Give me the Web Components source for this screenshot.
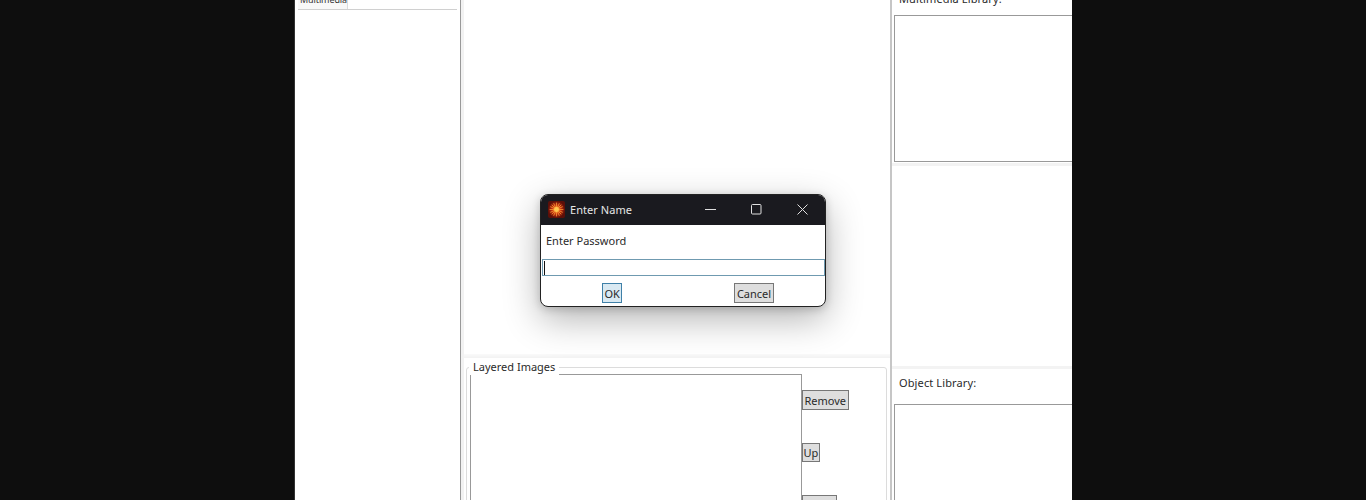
<!DOCTYPE html>
<html>
<head>
<meta charset="utf-8">
<title>Enter Name</title>
<style>
  html, body { margin: 0; height: 100%; background: #0e0e0e; overflow: hidden; }
  body { display: flex; justify-content: center; font: 11px "Noto Sans", "Liberation Sans", sans-serif; color: #2a2a2a; }
</style>
</head>
<body>
<template id="tpl-button">
  <style>
    :host { display: block; width: max-content; }
    button { display: block; font: inherit; color: #2a2a2a; height: var(--h, 20px); padding: 0 var(--px, 1.5px); background: #dedede; border: 1px solid #777; margin: 0; }
    :host([accent]) button { background: #d9e9f2; border-color: #3f80a8; }
  </style>
  <button><slot></slot></button>
</template>
<script>
  class WinButton extends HTMLElement {
    constructor() {
      super();
      this.attachShadow({ mode: "open" });
      this.shadowRoot.appendChild(document.getElementById("tpl-button").content.cloneNode(true));
    }
  }
  customElements.define("win-button", WinButton);

  class WinList extends HTMLElement {
    constructor() {
      super();
      this.attachShadow({ mode: "open" });
      this.shadowRoot.innerHTML = `
        <style>
          :host { display: block; box-sizing: border-box; background: #fff; border: 1px solid #999; }
        </style>
        <slot></slot>`;
    }
  }
  customElements.define("win-list", WinList);

  class SideTabs extends HTMLElement {
    constructor() {
      super();
      this.attachShadow({ mode: "open" });
      this.shadowRoot.innerHTML = `
        <style>
          :host { display: flex; flex-direction: column; height: 100%; box-sizing: border-box; background: #fff; border-left: 1px solid #333; border-right: 1px solid #999; padding: 0 3px; }
          .strip { height: 10px; flex: none; display: flex; align-items: flex-end; border-bottom: 1px solid #d0d0d0; box-sizing: border-box; overflow: hidden; }
          .tab { height: 14px; flex: none; width: 50px; box-sizing: border-box; padding-left: 2px; line-height: 9px; font-size: 9px; letter-spacing: -.1px; background: #f8f8f8; border-right: 1px solid #dcdcdc; color: #333; overflow: hidden; white-space: nowrap; }
        </style>
        <div class="strip"><div class="tab"><slot name="tab"></slot></div></div>
        <slot></slot>`;
    }
  }
  customElements.define("side-tabs", SideTabs);

  class LayerGroup extends HTMLElement {
    constructor() {
      super();
      this.attachShadow({ mode: "open" });
      this.shadowRoot.innerHTML = `
        <style>
          :host { display: block; flex: 1; min-height: 0; padding: 2px 3px 0 2px; }
          .frame { height: 200px; box-sizing: border-box; margin-top: 7px; border: 1px solid #dcdcdc; border-radius: 3px; padding: 6px 0 0 3px; display: flex; position: relative; }
          .legend { position: absolute; left: 2px; top: -9px; padding: 0 4px; background: #fff; line-height: 16px; }
          win-list { width: 332px; height: 300px; flex: none; }
          .actions { display: flex; flex-direction: column; padding-top: 16px; }
          .actions ::slotted(*) { flex: none; margin-bottom: 33px; }
        </style>
        <div class="frame">
          <div class="legend"><slot name="legend"></slot></div>
          <win-list></win-list>
          <div class="actions"><slot></slot></div>
        </div>`;
    }
  }
  customElements.define("layer-group", LayerGroup);

  class LibraryPane extends HTMLElement {
    constructor() {
      super();
      this.attachShadow({ mode: "open" });
      this.shadowRoot.innerHTML = `
        <style>
          :host { display: flex; flex-direction: column; min-height: 0; overflow: hidden; background: #fff; }
          .label { flex: none; display: flex; align-items: flex-end; height: var(--label-h, 35px); box-sizing: border-box; padding: 0 0 var(--label-pad, 13px) 7px; line-height: 16px; white-space: nowrap; letter-spacing: .12px; }
          win-list { flex: none; height: var(--list-h, 300px); margin-left: 2px; border-right: none; }
        </style>
        <div class="label"><slot></slot></div>
        <win-list></win-list>`;
    }
  }
  customElements.define("library-pane", LibraryPane);

  class NameDialog extends HTMLElement {
    constructor() {
      super();
      this.attachShadow({ mode: "open" });
      this.shadowRoot.innerHTML = `
        <style>
          :host { position: absolute; left: 246px; top: 194px; width: 286px; height: 113px; display: flex; flex-direction: column; box-sizing: border-box; background: #fff; border: 1px solid #222; border-radius: 8px; box-shadow: 0 12px 36px rgba(0,0,0,.3), 0 2px 8px rgba(0,0,0,.18); overflow: hidden; }
          .title { flex: none; height: 30px; background: #1a1a1f; color: #e6e6e6; display: flex; align-items: center; padding: 0 0 2px 7px; box-sizing: border-box; }
          .title svg.logo { margin-right: 5px; flex: none; }
          .name { flex: 1; letter-spacing: .06px; }
          .ctl { width: 46px; display: flex; justify-content: center; flex: none; }
          .prompt { flex: none; height: 34px; box-sizing: border-box; padding: 8px 0 0 5px; line-height: 16px; }
          .field { flex: none; height: 17px; margin: 0 0 0 1px; box-sizing: border-box; border: 1px solid #6f9ab0; display: flex; align-items: center; padding-left: 1px; }
          .caret { width: 1px; height: 14px; background: #111; }
          .buttons { flex: 1; display: flex; padding: 7px 0 0 61px; gap: 112px; }
        </style>
        <div class="title">
          <svg class="logo" width="17" height="17" viewBox="0 0 17 17">
            <defs><radialGradient id="sun"><stop offset="0" stop-color="#ff8a2a"/><stop offset=".5" stop-color="#c9300f"/><stop offset="1" stop-color="#5c0f08"/></radialGradient></defs>
            <rect width="17" height="17" rx="2" fill="url(#sun)"/>
            <g stroke="#f39a35" stroke-width=".8" stroke-linecap="round">
              <path d="M8.5 2v13M2 8.5h13M4 4l9 9M13 4l-9 9M5.8 2.6l5.4 11.8M11.2 2.6L5.8 14.4M2.6 5.8l11.8 5.4M14.4 5.8L2.6 11.2"/>
            </g>
            <circle cx="8.5" cy="8.5" r="2.4" fill="#ffc84f"/>
          </svg>
          <span class="name"><slot name="title"></slot></span>
          <span class="ctl"><svg width="11" height="11" viewBox="0 0 11 11"><path d="M0 5.5h11" stroke="#e0e0e0"/></svg></span>
          <span class="ctl"><svg width="11" height="11" viewBox="0 0 11 11"><rect x=".5" y=".5" width="9.5" height="9.5" rx="1" fill="none" stroke="#e0e0e0"/></svg></span>
          <span class="ctl"><svg width="11" height="11" viewBox="0 0 11 11"><path d="M.5.5l10 10M10.5.5l-10 10" stroke="#e0e0e0"/></svg></span>
        </div>
        <div class="prompt"><slot name="prompt"></slot></div>
        <div class="field"><div class="caret"></div></div>
        <div class="buttons"><slot></slot></div>`;
    }
  }
  customElements.define("name-dialog", NameDialog);

  class DesignerApp extends HTMLElement {
    constructor() {
      super();
      this.attachShadow({ mode: "open" });
      this.shadowRoot.innerHTML = `
        <style>
          :host { display: grid; grid-template-columns: 167px 429px 182px; width: 778px; height: 500px; position: relative; overflow: hidden; background: #fff; flex: none; }
          .middle { display: flex; flex-direction: column; border-left: 3px solid #f2f2f2; box-sizing: border-box; min-height: 0; }
          .canvas { height: 354px; flex: none; }
          .split { height: 4px; flex: none; background: linear-gradient(#fafafa, #f2f2f2); }
          .right { display: grid; grid-template-rows: 163px 3px 200px 3px 131px; border-left: 2px solid #c6c6c6; min-height: 0; }
          .gap { background: #f3f3f3; }
          .blank { background: #fff; }
        </style>
        <slot name="left"></slot>
        <div class="middle">
          <div class="canvas"></div>
          <div class="split"></div>
          <slot name="layers"></slot>
        </div>
        <div class="right">
          <slot name="multimedia"></slot>
          <div class="gap"></div>
          <div class="blank"></div>
          <div class="gap"></div>
          <slot name="objects"></slot>
        </div>
        <slot name="dialog"></slot>`;
    }
  }
  customElements.define("designer-app", DesignerApp);
</script>

<designer-app>
  <side-tabs slot="left"><span slot="tab">Multimedia</span></side-tabs>
  <layer-group slot="layers">
    <span slot="legend">Layered Images</span>
    <win-button>Remove</win-button>
    <win-button style="--h:19px;--px:.5px">Up</win-button>
    <win-button>Down</win-button>
  </layer-group>
  <library-pane slot="multimedia" style="--label-h:15px;--label-pad:8px;--list-h:147px">Multimedia Library:</library-pane>
  <library-pane slot="objects">Object Library:</library-pane>
  <name-dialog slot="dialog">
    <span slot="title">Enter Name</span>
    <span slot="prompt">Enter Password</span>
    <win-button accent>OK</win-button>
    <win-button>Cancel</win-button>
  </name-dialog>
</designer-app>
</body>
</html>
